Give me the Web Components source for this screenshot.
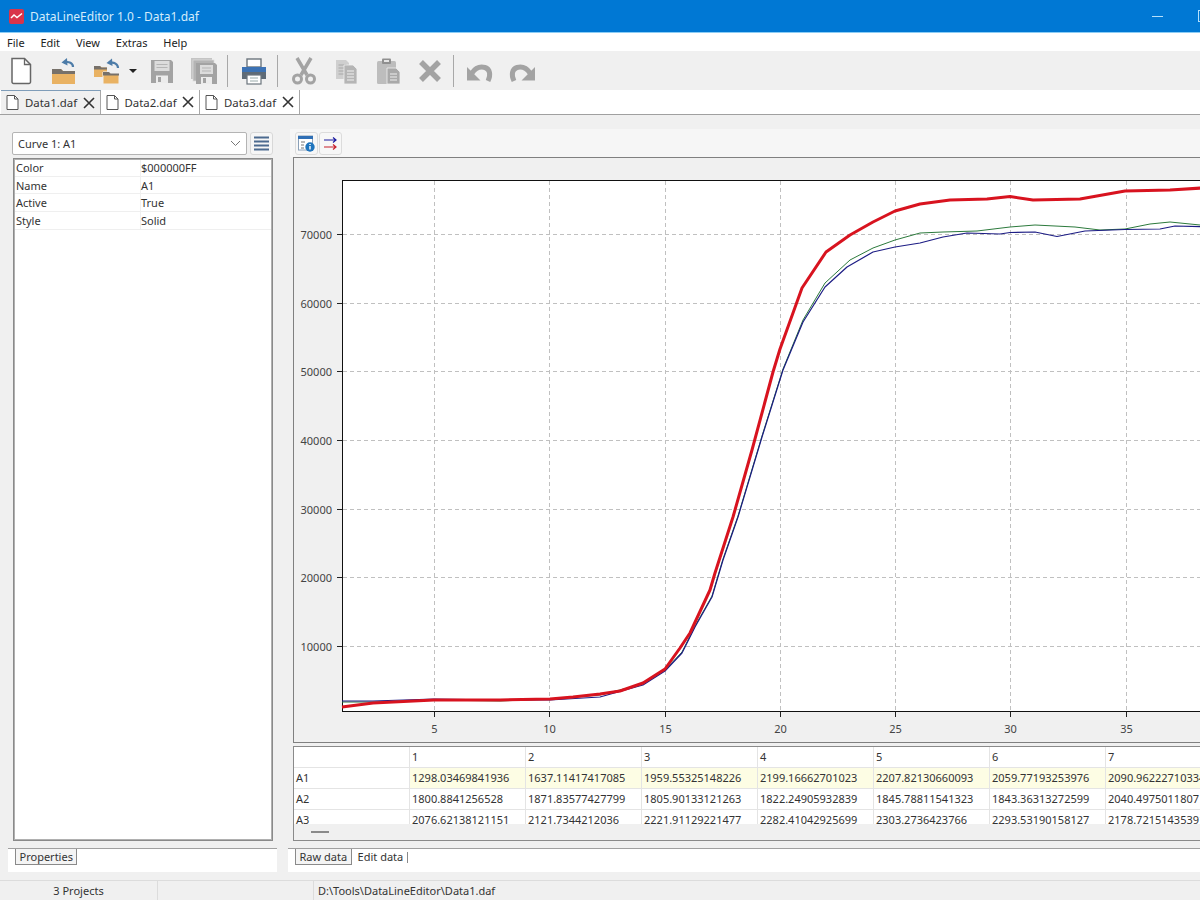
<!DOCTYPE html>
<html>
<head>
<meta charset="utf-8">
<title>DataLineEditor</title>
<style>
html, body { margin: 0; padding: 0; width: 1200px; height: 900px; overflow: hidden; background: #f0f0f0; }
body { font: 11px "Noto Sans", "Open Sans", sans-serif; color: #333; }
app-window { display: flex; }
</style>
</head>
<body>
<app-window>
  <title-bar>DataLineEditor 1.0 - Data1.daf</title-bar>
  <menu-bar></menu-bar>
  <main-toolbar></main-toolbar>
  <doc-tabs>
    <doc-tab active>Data1.daf</doc-tab>
    <doc-tab>Data2.daf</doc-tab>
    <doc-tab>Data3.daf</doc-tab>
  </doc-tabs>
  <work-area>
    <props-panel slot="left"></props-panel>
    <chart-panel slot="right"></chart-panel>
  </work-area>
  <status-bar></status-bar>
</app-window>

<script>
// toolbar icons, all on a 28x28 box
const ICONS = {
  new: `<path d="M5 1.500h12.500L23.500 7.500V25a1.500 1.500 0 0 1-1.500 1.500H6.500A1.500 1.500 0 0 1 5 25z" fill="#fff" stroke="#666" stroke-width="1.500"/><path d="M17.500 1.500v6h6" fill="none" stroke="#666" stroke-width="1.300"/>`,
  open: `<path d="M3 12h9l2 2h12v13H3z" fill="#e9b263"/><path d="M3 12h9l2 2h12v3H3z" fill="#77716a"/><path d="M24 10c0-4-4-6-9-4.500" fill="none" stroke="#4d7ca8" stroke-width="2.200"/><path d="M18 1l-5.500 4.500 6 3z" fill="#4d7ca8"/>`,
  folders: `<path d="M1 9h6l1.500 1.500H14V20H1z" fill="#e9b263"/><path d="M1 9h6l1.500 1.500H14v2H1z" fill="#77716a"/><path d="M10 15h6l1.500 1.500H26V27H10z" fill="#e9b263" stroke="#f0f0f0"/><path d="M10 15h6l1.500 1.500H26v2H10z" fill="#77716a"/><path d="M25 11c0-4-4-6-8-5" fill="none" stroke="#4d7ca8" stroke-width="2.200"/><path d="M19 1.500l-5.500 4.500 6 3z" fill="#4d7ca8"/>`,
  save: `<path d="M3 3h20l2 2v21H3z" fill="#a3a3a3"/><rect x="6.500" y="4" width="15" height="10" fill="#dcdcdc"/><path d="M8.500 7.500h11M8.500 10.500h11" stroke="#b5b5b5"/><rect x="8" y="18.500" width="12" height="7.500" fill="#ececec"/><rect x="10" y="20" width="3" height="5" fill="#a3a3a3"/>`,
  saveall: `<rect x="1" y="1" width="21" height="21" fill="#c4c4c4"/><rect x="3" y="3" width="21" height="21" fill="#b4b4b4" stroke="#ddd" stroke-width=".7"/><path d="M6 6h19l2 2v19H6z" fill="#a3a3a3"/><rect x="10" y="8" width="13" height="9" fill="#dcdcdc"/><path d="M12 11h9M12 14h9" stroke="#b5b5b5"/><rect x="11" y="20" width="11" height="7" fill="#ececec"/><rect x="13" y="21" width="3" height="5" fill="#a3a3a3"/>`,
  print: `<rect x="7" y="2" width="14" height="8" fill="#fff" stroke="#6c757d" stroke-width="1.400"/><path d="M2 13a3 3 0 0 1 3-3h18a3 3 0 0 1 3 3v9H2z" fill="#5e6b77"/><rect x="2" y="10" width="24" height="5" fill="#3c72b4"/><rect x="7" y="18" width="14" height="9" fill="#fff" stroke="#6c757d" stroke-width="1.200"/><path d="M10 21h8M10 24h8" stroke="#9aa"/>`,
  cut: `<path d="M7 1l10 17M21 1L11 18" stroke="#a3a3a3" stroke-width="3.500"/><circle cx="7.500" cy="22" r="4" fill="none" stroke="#a3a3a3" stroke-width="3"/><circle cx="20.500" cy="22" r="4" fill="none" stroke="#a3a3a3" stroke-width="3"/>`,
  copy: `<path d="M4 3h10l3 3v16H4z" fill="#cfcfcf"/><path d="M6.500 8h8M6.500 11h8M6.500 14h8M6.500 17h8" stroke="#a8a8a8"/><path d="M12 8h9l4 4v15H12z" fill="#b5b5b5" stroke="#f0f0f0" stroke-width=".8"/><path d="M15 14h7M15 17h7M15 20h7M15 23h7" stroke="#f0f0f0"/>`,
  paste: `<rect x="3" y="4" width="19" height="23" rx="1.500" fill="#bdbdbd"/><rect x="8" y="1.500" width="9" height="5.500" rx="1" fill="#8f8f8f"/><rect x="10" y="3" width="5" height="2" fill="#e4e4e4"/><path d="M13 11h9l4 4v12H13z" fill="#a9a9a9" stroke="#f0f0f0" stroke-width=".8"/><path d="M16 17h7M16 20h7M16 23h7" stroke="#eee"/>`,
  del: `<path d="M5 5l18 18M23 5L5 23" stroke="#a3a3a3" stroke-width="5.500"/>`,
  undo: `<path d="M6 16C10 10 15 9.500 19 10.500C24 12 25 18 22 24" fill="none" stroke="#a3a3a3" stroke-width="5"/><path d="M1 10v13.500h13.500z" fill="#a3a3a3"/>`,
  redo: `<path d="M22 16C18 10 13 9.500 9 10.500C4 12 3 18 6 24" fill="none" stroke="#a3a3a3" stroke-width="5"/><path d="M27 10v13.500H13.500z" fill="#a3a3a3"/>`
};

class AppWindow extends HTMLElement {
  constructor() {
    super();
    this.attachShadow({ mode: 'open' }).innerHTML = `
      <style>:host { display: flex; flex-direction: column; width: 1200px; height: 900px; overflow: hidden; }</style>
      <slot></slot>`;
  }
}

class TitleBar extends HTMLElement {
  constructor() {
    super();
    this.attachShadow({ mode: 'open' }).innerHTML = `
      <style>
        :host { display: flex; align-items: center; height: 32px; flex: none; background: #0078d4; color: #d4ecfb; border-bottom: 1px solid #8ccdf5; font-size: 12px; overflow: hidden; }
        svg { margin-left: 9px; margin-right: 6px; flex: none; }
        .text { flex: 1; }
        .min { width: 11px; height: 1px; background: #b5e0fb; margin-right: 35px; }
        .max { width: 10px; height: 10px; border: 1px solid #b5e0fb; margin-right: -10px; }
      </style>
      <svg width="15" height="15" viewBox="0 0 15 15"><rect width="15" height="15" rx="2" fill="#d9344a"/><path d="M2 9l3-3 3 2.500L13 4.500" fill="none" stroke="#fff" stroke-width="1.500"/></svg>
      <span class="text"><slot></slot></span>
      <span class="min"></span><span class="max"></span>`;
  }
}

class MenuBar extends HTMLElement {
  constructor() {
    super();
    const items = ['File', 'Edit', 'View', 'Extras', 'Help'];
    this.attachShadow({ mode: 'open' }).innerHTML = `
      <style>
        :host { display: flex; align-items: center; height: 18px; flex: none; background: #fff; padding-left: 7px; gap: 15.800px; color: #222; font-size: 11px; }
      </style>
      ${items.map(i => `<span>${i}</span>`).join('')}`;
  }
}

class ToolButton extends HTMLElement {
  constructor() {
    super();
    this.attachShadow({ mode: 'open' }).innerHTML = `
      <style>:host { display: flex; width: 42px; height: 39px; align-items: center; justify-content: center; flex: none; }</style>
      <svg width="28" height="28" viewBox="0 0 28 28">${ICONS[this.getAttribute('icon')]}</svg>`;
  }
}

class MainToolbar extends HTMLElement {
  constructor() {
    super();
    const btn = n => `<tool-button icon="${n}"></tool-button>`;
    this.attachShadow({ mode: 'open' }).innerHTML = `
      <style>
        :host { display: flex; align-items: center; height: 39px; flex: none; background: #f0f0f0; }
        .sep { width: 1px; height: 32px; background: #a8a8a8; margin: 0 5px 0 2px; flex: none; }
        .arrow { width: 0; height: 0; border: 4px solid transparent; border-top-color: #222; border-bottom: 0; margin: 1px 4px 0 1px; flex: none; }
        .gap2 { width: 2px; flex: none; }
      </style>
      ${btn('new')}${btn('open')}<span class="gap2"></span>${btn('folders')}
      <span class="arrow"></span>${btn('save')}${btn('saveall')}<span class="sep"></span>
      ${btn('print')}<span class="sep"></span>
      ${btn('cut')}${btn('copy')}${btn('paste')}${btn('del')}<span class="sep"></span>
      ${btn('undo')}${btn('redo')}`;
  }
}

class DocTabs extends HTMLElement {
  constructor() {
    super();
    this.attachShadow({ mode: 'open' }).innerHTML = `
      <style>:host { display: flex; height: 24px; flex: none; background: #fff; border-bottom: 1px solid #a0a0a0; padding-left: 1px; box-sizing: content-box; }</style>
      <slot></slot>`;
  }
}

class DocTab extends HTMLElement {
  constructor() {
    super();
    this.attachShadow({ mode: 'open' }).innerHTML = `
      <style>
        :host { display: flex; align-items: center; width: 99.500px; height: 24px; box-sizing: border-box; border-right: 1px solid #a8a8a8; background: #fff; padding-left: 5px; color: #333; font-size: 11.400px; }
        :host([active]) { background: #f0f0f0; border-top: 1px solid #7f9db9; }
        svg.page { margin-right: 6px; flex: none; }
        span { flex: 1; }
        svg.x { margin-right: 5px; flex: none; }
      </style>
      <svg class="page" width="13" height="15" viewBox="0 0 13 15"><path d="M1 .5h7.500L12 4v10.500H1z" fill="#fff" stroke="#555"/><path d="M8.500 .5V4H12" fill="none" stroke="#555"/></svg>
      <span><slot></slot></span>
      <svg class="x" width="12" height="12" viewBox="0 0 12 12"><path d="M1 1l10 10M11 1L1 11" stroke="#333" stroke-width="1.600"/></svg>`;
  }
}

class WorkArea extends HTMLElement {
  constructor() {
    super();
    this.attachShadow({ mode: 'open' }).innerHTML = `
      <style>
        :host { display: grid; grid-template-columns: 269px 922px; column-gap: 11px; padding-left: 8px; flex: 1; min-height: 0; background: #f0f0f0; overflow: hidden; }
      </style>
      <slot name="left"></slot><slot name="right"></slot>`;
  }
}

class BottomTabs extends HTMLElement {
  constructor() {
    super();
    this.attachShadow({ mode: 'open' }).innerHTML = `
      <style>
        :host { display: flex; height: 24px; box-sizing: border-box; background: #fff; border-top: 1px solid #a0a0a0; padding-left: 7px; color: #333; align-items: flex-start; flex: none; }
      </style>
      <slot></slot>`;
  }
}

class BottomTab extends HTMLElement {
  constructor() {
    super();
    this.attachShadow({ mode: 'open' }).innerHTML = `
      <style>
        :host { display: block; height: 16px; line-height: 15.500px; padding: 0 3.500px; box-sizing: border-box; border: 1px solid #8a8a8a; border-top: 0; background: #f4f4f4; font-size: 11px; }
        :host([current]) { border: 0; background: #fff; padding-left: 6px; }
      </style>
      <slot></slot>`;
  }
}

class PropsPanel extends HTMLElement {
  constructor() {
    super();
    const rows = [['Color', '$000000FF'], ['Name', 'A1'], ['Active', 'True'], ['Style', 'Solid']];
    this.attachShadow({ mode: 'open' }).innerHTML = `
      <style>
        :host { display: flex; flex-direction: column; padding-top: 17px; height: 100%; box-sizing: border-box; }
        .top { display: flex; gap: 3px; margin: 0 4px; height: 23px; }
        .combo { flex: 1; display: flex; align-items: center; justify-content: space-between; background: #fff; border: 1px solid #b4b4b4; border-radius: 2px; padding: 0 5px; font-size: 11px; color: #333; }
        .list { width: 23px; background: #f6f6f6; border: 1px solid #d8d8d8; border-radius: 3px; display: flex; align-items: center; justify-content: center; box-sizing: border-box; }
        .grid { margin: 3px 4px 0 5px; height: 683px; box-sizing: border-box; background: #fff; border: 1px solid #8a8a8a; outline: 1px solid #b0b0b0; outline-offset: -2px; padding: 0 0 0 1px; flex: none; }
        .row { display: grid; grid-template-columns: 125px 1fr; height: 17.700px; line-height: 17px; border-bottom: 1px solid #efefef; box-sizing: border-box; font-size: 11px; }
        .row span { padding-left: 1px; }
        .row span + span { border-left: 1px solid #f0f0f0; padding-left: 0; }
        bottom-tabs { margin-top: 7px; }
      </style>
      <div class="top">
        <div class="combo"><span>Curve 1: A1</span>
          <svg width="11" height="7" viewBox="0 0 11 7"><path d="M1 1l4.500 4.500L10 1" fill="none" stroke="#777"/></svg></div>
        <div class="list"><svg width="17" height="16" viewBox="0 0 17 16"><path d="M1 1.500h15M1 5.500h15M1 9.500h15M1 13.500h15" stroke="#4c6a8f" stroke-width="2"/></svg></div>
      </div>
      <div class="grid">
        ${rows.map(r => `<div class="row"><span>${r[0]}</span><span>${r[1]}</span></div>`).join('')}
      </div>
      <bottom-tabs><bottom-tab>Properties</bottom-tab></bottom-tabs>`;
  }
}

class LinePlot extends HTMLElement {
  constructor() {
    super();
    // curves in page pixels, the viewBox below maps them straight onto the frame
    const red = '342,707 373,703 434,700 500,700 550,699 573,697 600,694 620,691 643,683 665,669 680,648 690,633 710,590 715,573 733,517 752,450 773,372 780,349 802,288 826,252 850,235 873,222 895,211 920,204 950,200 987,199 1010,196.500 1033,200 1080,199 1125,191 1170,190 1210,187.500';
    const green = '342,702 373,702 434,700 500,701 550,699 600,695 643,684 665,670 682,652 695,626 712,596 723,559 738,516 762,436 783,369 803,320 825,283 850,260 873,248 895,240 920,233 943,232 977,231 1010,227 1035,225 1075,227 1100,230 1125,229 1150,224 1170,222 1210,226';
    const blue = '342,701 373,701 434,699 500,700 550,700 600,697 643,685 665,671 682,653 695,627 712,597 723,560 738,517 762,437 783,370 803,322 825,287 847,267 873,252 895,247 920,243 943,237 967,233 1000,234 1010,232.500 1035,232 1057,236.500 1085,231 1125,229.500 1160,229 1175,226 1210,227';
    const vx = [[434, 5], [549, 10], [665, 15], [780, 20], [895, 25], [1010, 30], [1126, 35]];
    const hy = [[234.500, 70000], [303.500, 60000], [371.500, 50000], [440.500, 40000], [509.500, 30000], [577.500, 20000], [646.500, 10000]];
    this.attachShadow({ mode: 'open' }).innerHTML = `
      <style>
        :host { display: block; height: 584px; overflow: hidden; }
        svg { display: block; }
        text { font: 11px "Noto Sans", sans-serif; fill: #444; }
      </style>
      <svg width="920" height="584" viewBox="294 158 920 584">
        <rect x="342.500" y="180.500" width="880" height="531" fill="#fff" stroke="#111"/>
        <g stroke="#c0c0c0" stroke-dasharray="4 3" fill="none">
          ${vx.map(v => `<path d="M${v[0] + .5} 181V711"/>`).join('')}
          ${hy.map(h => `<path d="M343 ${h[0]}H1214"/>`).join('')}
        </g>
        <g stroke="#222" fill="none">
          ${vx.map(v => `<path d="M${v[0] + .5} 712v5"/>`).join('')}
          ${hy.map(h => `<path d="M337 ${h[0]}h5"/>`).join('')}
        </g>
        ${vx.map(v => `<text x="${v[0] + .5}" y="733" text-anchor="middle">${v[1]}</text>`).join('')}
        ${hy.map(h => `<text x="332" y="${h[0] + 4}" text-anchor="end">${h[1]}</text>`).join('')}
        <polyline points="${green}" fill="none" stroke="#2c7a3c" stroke-width="1" stroke-linejoin="round"/>
        <polyline points="${blue}" fill="none" stroke="#1c1c84" stroke-width="1.200" stroke-linejoin="round"/>
        <polyline points="${red}" fill="none" stroke="#d8131f" stroke-width="3" stroke-linejoin="round"/>
      </svg>`;
  }
}

class DataGrid extends HTMLElement {
  constructor() {
    super();
    const data = [
      ['A1', '1298.03469841936', '1637.11417417085', '1959.55325148226', '2199.16662701023', '2207.82130660093', '2059.77193253976', '2090.96222710334'],
      ['A2', '1800.8841256528', '1871.83577427799', '1805.90133121263', '1822.24905932839', '1845.78811541323', '1843.36313272599', '2040.4975011807'],
      ['A3', '2076.62138121151', '2121.7344212036', '2221.91129221477', '2282.41042925699', '2303.2736423766', '2293.53190158127', '2178.72151435391']
    ];
    const cell = (t, cls) => `<div class="${cls}">${t}</div>`;
    const head = ['', 1, 2, 3, 4, 5, 6, 7].map(t => cell(t, 'c')).join('');
    const body = data.map((r, i) => r.map((t, j) => cell(t, j && i === 0 ? 'c hi' : 'c')).join('')).join('');
    this.attachShadow({ mode: 'open' }).innerHTML = `
      <style>
        :host { display: block; height: 95px; box-sizing: border-box; border: 1px solid #8a8a8a; background: #f0f0f0; overflow: hidden; flex: none; position: relative; }
        .cells { display: grid; grid-template-columns: repeat(8, 116px); grid-auto-rows: 21px; height: 77px; overflow: hidden; background: #fff; font-size: 11px; color: #333; }
        .c { padding-left: 2px; line-height: 20px; border-right: 1px solid #e4e4e4; border-bottom: 1px solid #e4e4e4; box-sizing: border-box; white-space: nowrap; overflow: hidden; }
        .hi { background: #fdfde4; }
        .thumb { width: 18px; height: 1.500px; background: #8a8a8a; margin: 7px 0 0 17px; }
      </style>
      <div class="cells">${head}${body}</div>
      <div class="thumb"></div>`;
  }
}

class ChartPanel extends HTMLElement {
  constructor() {
    super();
    this.attachShadow({ mode: 'open' }).innerHTML = `
      <style>
        :host { display: flex; flex-direction: column; padding-top: 14px; height: 100%; box-sizing: border-box; }
        .bar { display: flex; gap: 1px; height: 28px; box-sizing: border-box; background: #f6f6f6; padding: 3px 0 0 5px; margin-left: 2px; flex: none; }
        .b { width: 23px; height: 23px; box-sizing: border-box; border: 1px solid #dcdcdc; border-radius: 3px; background: #f7f7f7; display: flex; align-items: center; justify-content: center; }
        .frame { margin: 0 0 3px 5px; box-sizing: border-box; height: 586px; border: 1px solid #808080; flex: none; }
        data-grid { margin-left: 5px; }
        bottom-tabs { margin-top: 7px; }
      </style>
      <div class="bar">
        <div class="b"><svg width="17" height="17" viewBox="0 0 17 17"><rect x=".5" y="1" width="14" height="14" fill="#fff" stroke="#8aa0b8"/><rect y="1" width="15" height="3" fill="#2f6fb5"/><path d="M3 7h4M3 10h3M3 13h3" stroke="#777"/><circle cx="12" cy="12" r="4.700" fill="#1f74bd"/><path d="M12 11v3.500M12 9v1" stroke="#fff" stroke-width="1.400"/></svg></div>
        <div class="b"><svg width="17" height="17" viewBox="0 0 17 17"><path d="M2 5h12M11 2.500L14 5l-3 2.500" fill="none" stroke="#1a1aa0" stroke-width="1.200"/><path d="M2 12h12M11 9.500l3 2.500-3 2.500" fill="none" stroke="#c8202c" stroke-width="1.200"/></svg></div>
      </div>
      <div class="frame"><line-plot></line-plot></div>
      <data-grid></data-grid>
      <bottom-tabs><bottom-tab>Raw data</bottom-tab><bottom-tab current>Edit data</bottom-tab><span style="width:1px;height:11px;margin-top:3px;background:#8a8a8a"></span></bottom-tabs>`;
  }
}

class StatusBar extends HTMLElement {
  constructor() {
    super();
    this.attachShadow({ mode: 'open' }).innerHTML = `
      <style>
        :host { display: grid; grid-template-columns: 157px 156px 1fr; height: 20px; flex: none; box-sizing: border-box; border-top: 1px solid #dcdcdc; background: #f0f0f0; color: #333; font-size: 11px; line-height: 20px; }
        div + div { border-left: 1px solid #dcdcdc; }
        .a { text-align: center; }
        .c { padding-left: 4px; }
      </style>
      <div class="a">3 Projects</div><div></div><div class="c">D:\\Tools\\DataLineEditor\\Data1.daf</div>`;
  }
}

customElements.define('app-window', AppWindow);
customElements.define('title-bar', TitleBar);
customElements.define('menu-bar', MenuBar);
customElements.define('tool-button', ToolButton);
customElements.define('main-toolbar', MainToolbar);
customElements.define('doc-tabs', DocTabs);
customElements.define('doc-tab', DocTab);
customElements.define('work-area', WorkArea);
customElements.define('bottom-tabs', BottomTabs);
customElements.define('bottom-tab', BottomTab);
customElements.define('props-panel', PropsPanel);
customElements.define('line-plot', LinePlot);
customElements.define('data-grid', DataGrid);
customElements.define('chart-panel', ChartPanel);
customElements.define('status-bar', StatusBar);
</script>
</body>
</html>
